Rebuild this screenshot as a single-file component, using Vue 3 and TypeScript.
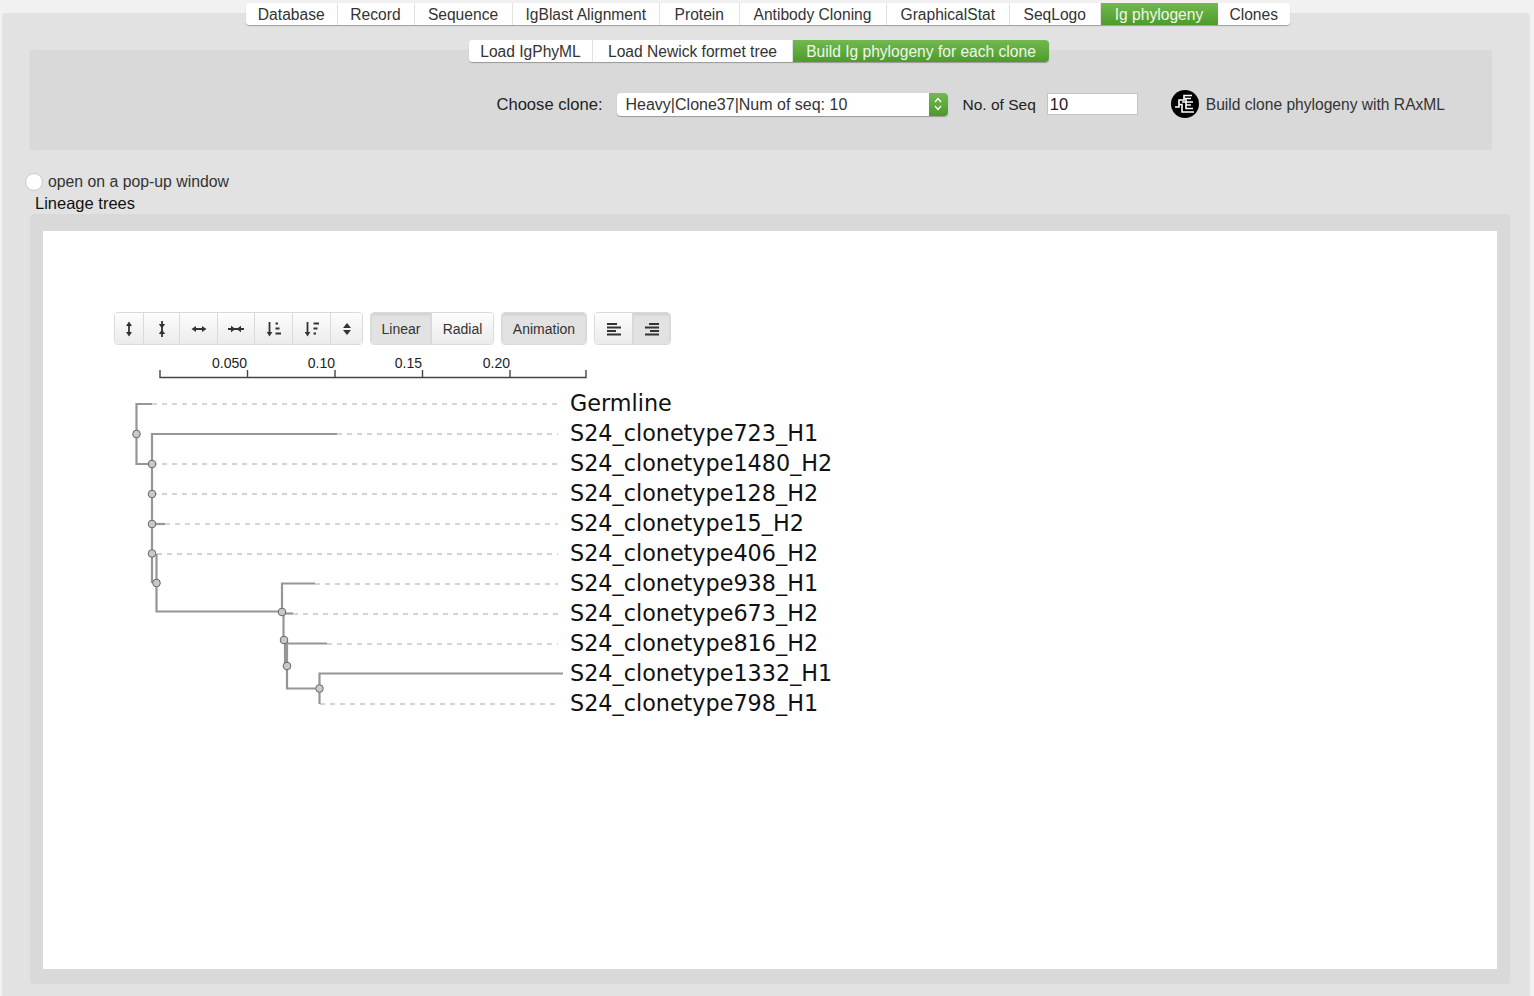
<template>
  <div class="page">
    <div class="panel">
      <div class="tabs main">
        <a v-for="t in tabs" :key="t" class="tab" :class="{ active: t === 'Ig phylogeny' }">{{ t }}</a>
      </div>

      <div class="well">
        <div class="tabs subtabs">
          <a v-for="t in subTabs" :key="t" class="tab" :class="{ active: t === subTabs[2] }">{{ t }}</a>
        </div>
        <div class="clone-row">
          <label class="lbl">Choose clone:</label>
          <div class="select">
            <span>Heavy|Clone37|Num of seq: 10</span>
            <span class="caret">
              <svg width="10" height="16" viewBox="0 0 10 16">
                <path d="M2 6 5 2.5 8 6M2 10 5 13.5 8 10" fill="none" stroke="#fff" stroke-width="1.4" />
              </svg>
            </span>
          </div>
          <label class="lbl small">No. of Seq</label>
          <input class="num" value="10" />
          <svg class="logo" width="28" height="28" viewBox="0 0 28 28">
            <circle cx="14" cy="14" r="14" fill="#000" />
            <path d="M4 17H8V10H13V5.500H21M13 8.500H20M8 14.500H11V22H23M11 12H15V9M15 12H22M15 12V18.500H22M15 15H20" fill="none" stroke="#fff" stroke-width="1.6" />
          </svg>
          <span class="build">Build clone phylogeny with RAxML</span>
        </div>
      </div>

      <div class="radio-row">
        <span class="radio"></span>
        <span>open on a pop-up window</span>
      </div>
      <div class="heading">Lineage trees</div>

      <div class="tree-well">
        <div class="canvas">
          <div class="toolbar">
            <div class="btn-group">
              <button v-for="b in sizeIcons" :key="b.w + b.d" class="btn" :style="{ width: b.w + 'px' }">
                <svg width="18" height="18" viewBox="0 0 18 18">
                  <path :d="b.d" fill="none" stroke="#333" stroke-width="1.8" />
                  <path v-if="b.f" :d="b.f" fill="#333" />
                </svg>
              </button>
            </div>
            <div class="btn-group">
              <button class="btn on" style="width: 61px">Linear</button>
              <button class="btn" style="width: 61px">Radial</button>
            </div>
            <div class="btn-group">
              <button class="btn on" style="width: 84px">Animation</button>
            </div>
            <div class="btn-group">
              <button class="btn" style="width: 38px">
                <svg width="16" height="14" viewBox="0 0 16 14">
                  <path d="M1 2H11M1 5.500H15M1 9H10M1 12.500H15" fill="none" stroke="#333" stroke-width="1.9" />
                </svg>
              </button>
              <button class="btn on" style="width: 37px">
                <svg width="16" height="14" viewBox="0 0 16 14">
                  <path d="M5 2H15M1 5.500H15M6 9H15M1 12.500H15" fill="none" stroke="#333" stroke-width="1.9" />
                </svg>
              </button>
            </div>
          </div>

          <svg class="tree" width="900" height="390" viewBox="43 350 900 390">
            <path d="M160 370V377.500H586V370M247.500 370V377M335 370V377M422.500 370V377M510 370V377" fill="none" stroke="#444" stroke-width="1.4" />
            <text v-for="a in axis" :key="a.t" :x="a.x" y="367.500" text-anchor="end" class="tick">{{ a.t }}</text>

            <path v-for="d in dashes" :key="d[1]" :d="`M${d[0]} ${d[1]}H558`" class="dash" />
            <path v-for="(b, i) in branches" :key="i" :d="b" class="branch" />
            <circle v-for="n in nodes" :key="n[0] + '-' + n[1]" :cx="n[0]" :cy="n[1]" r="3.800" class="node" />
            <text v-for="l in leaves" :key="l.t" x="570" :y="l.y + 7.300" class="leaf">{{ l.t }}</text>
          </svg>
        </div>
      </div>
    </div>
  </div>
</template>

<script setup lang="ts">
const tabs = ['Database', 'Record', 'Sequence', 'IgBlast Alignment', 'Protein', 'Antibody Cloning', 'GraphicalStat', 'SeqLogo', 'Ig phylogeny', 'Clones']
const subTabs = ['Load IgPhyML', 'Load Newick formet tree', 'Build Ig phylogeny for each clone']

const sizeIcons = [
  { w: 29, d: 'M9 4V14', f: 'M9 1.500 6 6H12ZM9 16.500 6 12H12Z' },
  { w: 36, d: 'M9 1V17', f: 'M9 8.500 5.800 4H12.200ZM9 9.500 5.800 14H12.200Z' },
  { w: 38, d: 'M4 9H14', f: 'M1.500 9 6 6V12ZM16.500 9 12 6V12Z' },
  { w: 37, d: 'M1 9H17', f: 'M8.500 9 4 5.800V12.200ZM9.500 9 14 5.800V12.200Z' },
  { w: 38, d: 'M4.500 2V13M10.500 3.500H13M10.500 8.500H14.500M10.500 13.500H16', f: 'M4.500 16.500 1.700 12H7.300Z' },
  { w: 38, d: 'M4.500 2V13M10.500 3.500H16M10.500 8.500H14.500M10.500 13.500H13', f: 'M4.500 16.500 1.700 12H7.300Z' },
  { w: 31, d: '', f: 'M9 3 13 8H5ZM9 15 5 10H13Z' },
]

const axis = [
  { t: '0.050', x: 247 },
  { t: '0.10', x: 335 },
  { t: '0.15', x: 422 },
  { t: '0.20', x: 510 },
]

const names = ['Germline', 'S24_clonetype723_H1', 'S24_clonetype1480_H2', 'S24_clonetype128_H2', 'S24_clonetype15_H2', 'S24_clonetype406_H2', 'S24_clonetype938_H1', 'S24_clonetype673_H2', 'S24_clonetype816_H2', 'S24_clonetype1332_H1', 'S24_clonetype798_H1']
const leaves = names.map((t, i) => ({ t, y: 404 + i * 30 }))

const dashes = [[152, 404], [337, 434], [152, 464], [152, 494], [165, 524], [157, 554], [315, 584], [293, 614], [327, 644], [320, 704]]

const branches = [
  'M152 404H136.500V464H152',
  'M337 434H152V554',
  'M152 524H165',
  'M152 554V582H156.500',
  'M156.500 554V611.500H282',
  'M315 583.500H282V612',
  'M282 613.500H293',
  'M283.500 612V641',
  'M285 641V664',
  'M327 643.500H285',
  'M287 640V688.500H319.500',
  'M563 673.500H319.500V704',
]

const nodes = [[136.500, 434], [152, 464], [152, 494], [152, 524], [152, 553.500], [156.500, 583], [282, 612], [284, 640], [287, 666], [319.500, 688.500]]
</script>

<style>
html,
body {
  margin: 0;
  background: #f1f1f1;
}
</style>

<style scoped>
.page {
  height: 996px;
  padding-top: 13px;
  box-sizing: border-box;
  overflow: hidden;
  font-family: "Liberation Sans", Arial, sans-serif;
  color: #333;
}

.panel {
  display: flow-root;
  width: 1528px;
  height: 983px;
  margin-left: 2px;
  background: #e2e2e2;
  border-radius: 4px 4px 0 0;
}

.tabs {
  display: grid;
  grid-template-columns: 124px 200px 256px;
  width: fit-content;
  height: 22px;
  border-radius: 4px;
  box-shadow: 0 1px 1px rgba(0, 0, 0, 0.3);
  background: #fff;
  overflow: hidden;
}

.tabs.main {
  grid-template-columns: 91.500px 77px 98px 147.500px 79.500px 147px 123.500px 90.500px 117px 72.500px;
  margin: -10px 0 0 244px;
}

.tab {
  box-sizing: border-box;
  font-size: 15.600px;
  line-height: 23px;
  text-align: center;
  white-space: nowrap;
  color: #333;
  background: #fff;
  border-right: 1px solid #e2e2e2;
}

.tab:last-child {
  border-right: 0;
}

.tab.active {
  background: linear-gradient(#72b950, #4b9a2a);
  color: #eef7e8;
  border-right: 0;
}

.well {
  display: flow-root;
  height: 100px;
  margin: 25px 0 0 28px;
  width: 1462px;
  background: #d9d9d9;
  border-radius: 4px;
  box-shadow: 0 0 1px rgba(0, 0, 0, 0.12);
}

.subtabs {
  margin: -10px 0 0 439px;
}

.clone-row {
  display: flex;
  justify-content: flex-end;
  align-items: center;
  height: 30px;
  margin-top: 27px;
  padding-right: 47px;
  font-size: 15.600px;
}

.lbl {
  padding-top: 2px;
  color: #222;
  font-size: 16.600px;
  margin-right: 14px;
}

.lbl.small {
  padding-top: 1px;
  font-size: 15.500px;
  margin: 0 11px 0 15px;
}

.select {
  display: flex;
  justify-content: space-between;
  width: 331px;
  height: 23px;
  line-height: 23px;
  padding-left: 9px;
  box-sizing: border-box;
  font-size: 16px;
  background: #fff;
  border-radius: 4px;
  box-shadow: 0 1px 1px rgba(0, 0, 0, 0.3);
  overflow: hidden;
}

.caret {
  display: flex;
  align-items: center;
  justify-content: center;
  width: 19px;
  background: linear-gradient(#72b950, #4b9a2a);
}

.num {
  width: 91px;
  height: 22px;
  padding: 1px 2px 0;
  box-sizing: border-box;
  border: 1px solid #c4c4c4;
  background: #fff;
  font: 16.500px "Liberation Sans", Arial, sans-serif;
  color: #222;
}

.logo {
  margin: 0 7px 0 33px;
}

.build {
  padding-top: 2px;
  font-size: 15.600px;
}

.radio-row {
  display: flex;
  align-items: center;
  gap: 5px;
  height: 18px;
  margin: 23px 0 0 23px;
  font-size: 15.800px;
}

.radio {
  width: 18px;
  height: 18px;
  box-sizing: border-box;
  border-radius: 50%;
  background: #fff;
  border: 1px solid #c8c8c8;
}

.heading {
  height: 23px;
  margin-left: 33px;
  font-size: 16.500px;
  line-height: 25px;
  color: #111;
}

.tree-well {
  width: 1480px;
  height: 770px;
  margin-left: 28px;
  padding: 17px 13px 15px;
  box-sizing: border-box;
  background: #d9d9d9;
  border-radius: 4px;
}

.canvas {
  height: 738px;
  background: #fff;
  padding-top: 81px;
  box-sizing: border-box;
}

.toolbar {
  display: flex;
  gap: 7px;
  height: 33px;
  margin-left: 71px;
}

.btn-group {
  display: flex;
  border: 1px solid #dadada;
  border-radius: 4px;
  overflow: hidden;
  box-sizing: border-box;
}

.btn {
  display: flex;
  align-items: center;
  justify-content: center;
  height: 100%;
  padding: 0;
  margin: 0;
  box-sizing: border-box;
  border: 0;
  border-right: 1px solid #dadada;
  background: linear-gradient(#fdfdfd, #ebebeb);
  font: 14px "Liberation Sans", Arial, sans-serif;
  color: #333;
}

.btn:last-child {
  border-right: 0;
}

.btn.on {
  background: #e2e2e2;
  box-shadow: inset 0 2px 3px rgba(0, 0, 0, 0.08);
}

.tree {
  display: block;
  margin-top: 5px;
}

.tick {
  font: 14px "Liberation Sans", Arial, sans-serif;
  fill: #222;
}

.leaf {
  font: 22.300px "DejaVu Sans", Verdana, sans-serif;
  fill: #111;
}

.dash {
  fill: none;
  stroke: #c6c6c6;
  stroke-width: 1.300;
  stroke-dasharray: 5 5;
}

.branch {
  fill: none;
  stroke: #969696;
  stroke-width: 2.200;
}

.node {
  fill: #c9c9c9;
  stroke: #666;
  stroke-width: 1;
}
</style>
